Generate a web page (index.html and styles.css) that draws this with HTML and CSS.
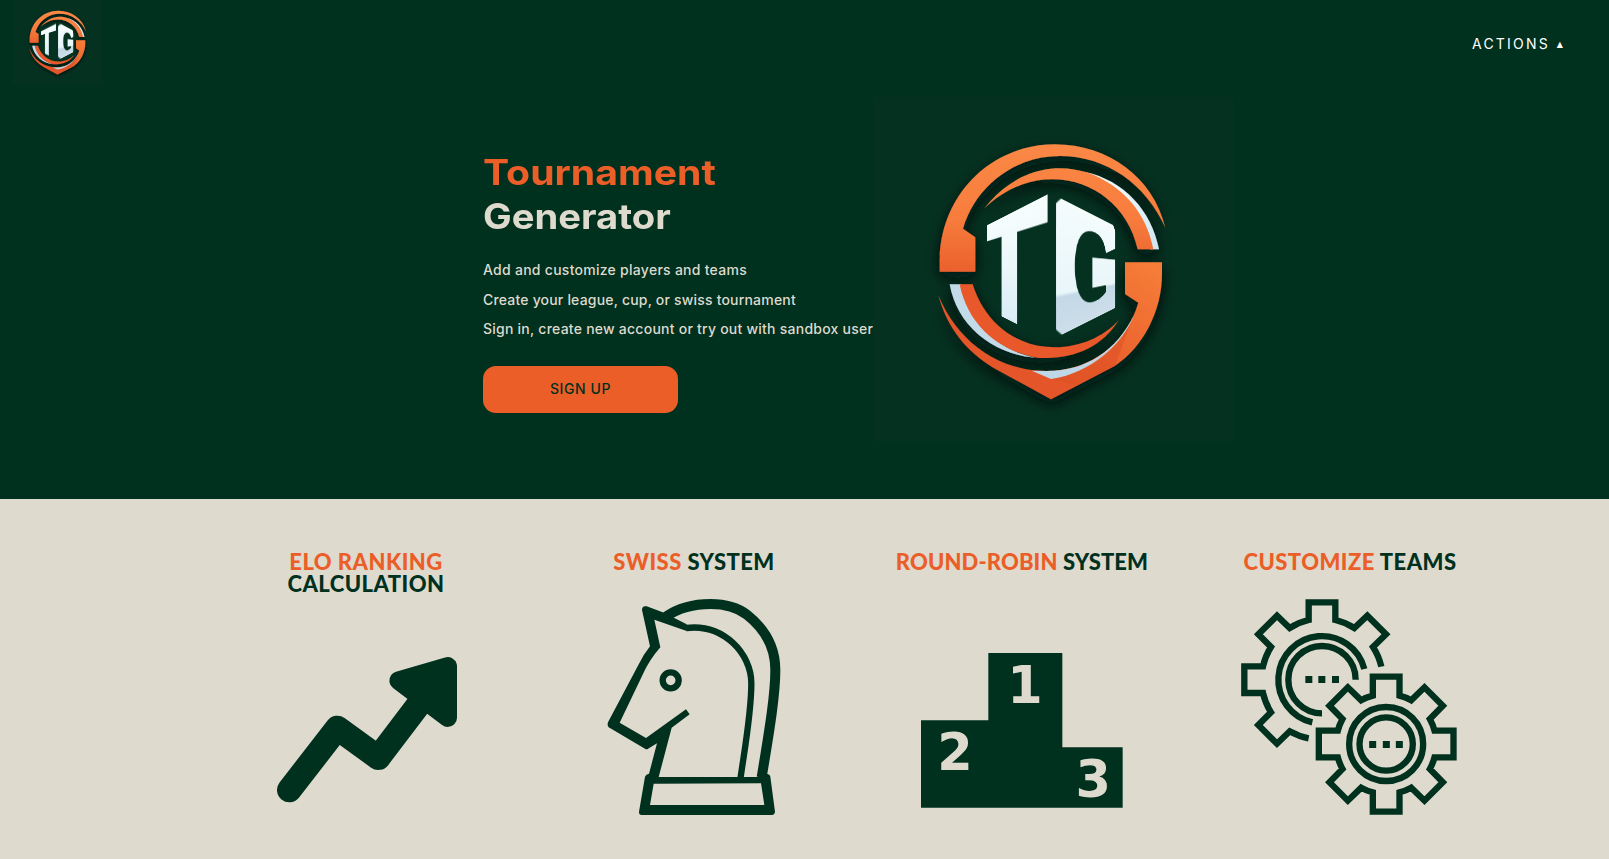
FILE: index.html
```html
<!DOCTYPE html>
<html lang="en">
<head>
<meta charset="utf-8">
<title>Tournament Generator</title>
<link rel="stylesheet" href="styles.css">
</head>
<body>
<svg class="defs" width="0" height="0" aria-hidden="true">
  <defs>
    <linearGradient id="warm" gradientUnits="userSpaceOnUse" x1="0" y1="162" x2="0" y2="550">
      <stop offset="0" stop-color="#fa8845"/><stop offset=".55" stop-color="#f87d3e"/><stop offset="1" stop-color="#ea602c"/>
    </linearGradient>
    <linearGradient id="ember" gradientUnits="userSpaceOnUse" x1="860" y1="516" x2="600" y2="880">
      <stop offset="0" stop-color="#f67c38"/><stop offset=".6" stop-color="#ec652e"/><stop offset="1" stop-color="#e4552a"/>
    </linearGradient>
    <linearGradient id="ice" x1="0" y1="0" x2="0" y2="1">
      <stop offset="0" stop-color="#f3fbfc"/><stop offset="1" stop-color="#cfe5f1"/>
    </linearGradient>
    <filter id="shade" x="-20%" y="-20%" width="140%" height="150%">
      <feDropShadow dx="0" dy="16" stdDeviation="20" flood-color="#00100a" flood-opacity=".85"/>
    </filter>
    <symbol id="emblem" viewBox="39 20 1080 1032">
      <g filter="url(#shade)">
        <path fill="url(#warm)" d="M239 544V510C242 310 395 162 585 162C745 162 880 262 916 412C858 282 740 197 600 197C460 197 345 290 309 415L346 441V544Z"/>
        <path fill="url(#ice)" d="M675 245C790 270 875 360 897 477H870C855 370 790 290 675 245Z"/>
        <path fill="url(#warm)" d="M373 354C430 280 510 234 600 234C630 234 655 239 680 246C790 285 860 370 880 477H833C805 350 700 267 577 267C500 267 430 300 373 354Z"/>
        <path fill="#c3dbe9" d="M269 582H305C330 690 400 775 525 802C390 790 290 700 269 582Z"/>
        <path fill="#e8592b" d="M299 582H338C375 700 470 771 585 771C660 771 730 740 776 690C730 765 650 803 560 803C545 803 530 803 520 800C400 775 320 690 299 582Z"/>
        <path fill="url(#ember)" d="M795 516H906V550C906 660 850 770 765 826L573 927L400 832C320 785 260 710 235 615C290 750 410 842 560 842C690 842 800 760 835 637L795 611Z"/>
        <path fill="#dc5027" opacity=".55" d="M818 683C775 780 690 850 573 866L650 886L765 826Z"/>
        <path fill="#bfd8e7" d="M515 841L573 866C690 850 790 760 822 674C770 780 680 842 560 842Z"/>
      </g>
    </symbol>
  </defs>
</svg>

<header class="topbar">
  <a class="logo logo-small" href="#">
    <svg class="logo-ring"><use href="#emblem"/></svg>
    <span class="letter letter-t">T</span><span class="letter letter-g">G</span>
  </a>
  <nav class="nav"><span class="nav-label">ACTIONS</span><span class="caret">▲</span></nav>
</header>

<main>
  <section class="hero">
    <div class="intro">
      <h1 class="title"><span class="accent title-first">Tournament</span><span class="title-second">Generator</span></h1>
      <p class="line line-one">Add and customize players and teams</p>
      <p class="line line-two">Create your league, cup, or swiss tournament</p>
      <p class="line line-three">Sign in, create new account or try out with sandbox user</p>
      <button class="signup">SIGN UP</button>
    </div>
    <div class="logo logo-large">
      <svg class="logo-ring"><use href="#emblem"/></svg>
      <span class="letter letter-t">T</span><span class="letter letter-g">G</span>
    </div>
  </section>

  <section class="features">
    <article class="feature">
      <h2 class="feature-title"><span class="accent">ELO RANKING</span><br>CALCULATION</h2>
      <svg class="icon" viewBox="-6 207 648 648">
        <path class="arrow-line" d="M88 780L232 594L355 683L475 525"/>
        <path class="arrow-head" d="M416 452L563 409V563Z"/>
      </svg>
    </article>
    <article class="feature">
      <h2 class="feature-title"><span class="accent">SWISS</span> SYSTEM</h2>
      <svg class="icon" viewBox="-12 207 648 648">
        <path class="stroke-bold" d="M228 260C265 234 310 222 362 222C402 222 442 232 471 254C528 299 556 352 556 420C556 500 535 620 515 742"/>
        <path class="stroke-thin" d="M288 294C400 280 484 370 484 460C484 550 465 650 451 748"/>
        <path class="solid" d="M156 240Q156 226 170 229L222 248L290 283V303L193 269L211 352Q178 390 160 430L89 578L168 624L288 538L299 553L245 593L205 745L176 735L201 640L173 657Q169 659 165 656L56 592Q51 586 54 577L145 405Q160 374 180 349Z"/>
        <circle class="stroke-thin" cx="242" cy="451" r="24"/>
        <path class="solid" fill-rule="evenodd" d="M165 740Q168 732 177 731L205 741H500L530 731Q540 733 541 740L555 845Q554 854 546 855H155Q146 854 147 845ZM191 761L180 825H523L513 760Z"/>
      </svg>
    </article>
    <article class="feature">
      <h2 class="feature-title feature-title-wide"><span class="accent">ROUND-ROBIN</span> SYSTEM</h2>
      <svg class="icon" viewBox="102 207 648 648">
        <path class="solid" d="M123 571H325V369H547V652H728V833H123Z"/>
        <text class="place" x="435" y="518">1</text>
        <text class="place" x="225" y="720">2</text>
        <text class="place" x="640" y="801">3</text>
      </svg>
    </article>
    <article class="feature">
      <h2 class="feature-title"><span class="accent">CUSTOMIZE</span> TEAMS</h2>
      <svg class="icon" viewBox="66 207 648 648">
        <g transform="translate(306 449)">
          <path class="stroke-thin" d="M178 -39A183 183 0 0 0 153 -98L192 -136L136 -192L97 -155A183 183 0 0 0 40 -179V-232H-40V-179A183 183 0 0 0 -97 -155L-135 -192L-191 -136L-153 -98A183 183 0 0 0 -177 -40H-233V40H-177A183 183 0 0 0 -153 98L-191 136L-135 192L-97 155A183 183 0 0 0 -40 176"/>
          <path class="stroke-thin" d="M127 -32A131 131 0 1 0 -29 128M101 0A101 101 0 1 0 0 101"/>
          <path class="solid" d="M-50 -11h21v21h-21zM-11 -11h21v21h-21zM30 -11h21v21h-21z"/>
        </g>
        <g transform="translate(498.500 642)">
          <path class="stroke-thin" d="M40 -202V-145A150 150 0 0 1 75 -131L115 -170L170 -115L131 -75A150 150 0 0 1 145 -40H202V40H145A150 150 0 0 1 131 75L170 115L115 170L75 131A150 150 0 0 1 40 145V203H-40V145A150 150 0 0 1 -75 131L-115 170L-170 115L-131 75A150 150 0 0 1 -145 40H-202V-40H-145A150 150 0 0 1 -131 -75L-170 -115L-115 -170L-75 -131A150 150 0 0 1 -40 -145V-202Z"/>
          <circle class="stroke-thin" r="111"/><circle class="stroke-thin" r="80"/>
          <path class="solid" d="M-51 -9h21v21h-21zM-10 -9h21v21h-21zM29 -9h21v21h-21z"/>
        </g>
      </svg>
    </article>
  </section>
</main>
</body>
</html>
```
FILE: styles.css
```css
:root {
  --green: #00301e;
  --orange: #eb5e28;
  --cream: #dedacd;
}

* { box-sizing: border-box; }

body {
  margin: 0;
  height: 859px;
  overflow: hidden;
  background: var(--cream);
  font-family: Inter, "Open Sans", sans-serif;
}

.defs { position: absolute; }

.topbar {
  display: flex;
  justify-content: space-between;
  height: 86px;
  padding: 0 46px 0 13px;
  background: var(--green);
}

.nav {
  display: flex;
  align-items: center;
  gap: 7px;
  height: 87px;
  color: #fff;
  font-size: 14px;
}

.nav-label { letter-spacing: 2.2px; }
.caret { font: 8px "DejaVu Sans", sans-serif; padding-top: 2px; }

/* The emblem scales with its font size: 1em is the width of its square. */
.logo {
  position: relative;
  display: block;
  flex: none;
  width: 1em;
  height: .9556em;
  background: #053121;
  text-decoration: none;
}

.logo-small { margin-top: -1px; font-size: 90px; }
.logo-large { font-size: 360px; }
.logo-ring { display: block; width: 100%; height: 100%; }

/* Both letters fold away from the centre of the emblem. */
.letter {
  position: absolute;
  top: calc(511em / 578 - .365em);
  height: .73em;
  font: bold .535em/.73 "Liberation Sans", Arial, sans-serif;
  color: transparent;
  background: linear-gradient(#f6fdfd, #ebf7fa 50%, #d9ecf6);
  -webkit-background-clip: text;
  background-clip: text;
}

.letter-t {
  right: calc(559em / 578 - .005em);
  width: .611em;
  -webkit-text-stroke: .025em transparent;
  transform-origin: .595em center;
  transform: perspective(.727em) rotateY(-45deg) scale(1.22, 1.03);
}

/* Trimming the round edges gives the G its squared corners. */
.letter-g {
  left: calc(546em / 578 - .09em);
  width: .778em;
  background-image: linear-gradient(#f6fdfd, #e9f6fa 66%, #c4d9e6 68%, #cfe1ec);
  -webkit-text-stroke: .07em transparent;
  clip-path: inset(.062em .085em .062em .095em);
  transform-origin: .095em center;
  transform: perspective(.727em) rotateY(45deg) scale(1.25, 1.2);
}

.hero {
  display: flex;
  height: 413px;
  padding: 11px 0 0 483px;
  background: var(--green);
}

.intro { width: 390px; padding-top: 53px; white-space: nowrap; }

.title {
  margin: 0 0 17px;
  color: var(--cream);
  font-size: 35px;
  font-weight: 700;
  line-height: 44px;
}

/* Widened letterforms for the headline. */
.title > span { display: block; transform-origin: left center; }
.title-first { transform: scaleX(1.12); }
.title-second { transform: scaleX(1.092); }
.accent { color: var(--orange); }

.line {
  margin: 0;
  color: var(--cream);
  font-size: 14px;
  font-weight: 500;
  line-height: 29.5px;
}

.line-one { letter-spacing: .27px; }
.line-two { letter-spacing: .19px; }
.line-three { letter-spacing: .24px; }

.signup {
  display: block;
  width: 195px;
  height: 47px;
  margin-top: 22px;
  padding: 0 0 1px;
  border: 0;
  border-radius: 13px;
  background: var(--orange);
  color: var(--green);
  font: 500 14px Inter, sans-serif;
  letter-spacing: .6px;
}

.features {
  display: grid;
  grid-template-columns: repeat(4, 328px);
  padding: 52px 0 0 202px;
}

.feature { display: flex; flex-direction: column; align-items: center; }

.feature-title {
  height: 48px;
  margin: 0;
  color: var(--green);
  font: 900 22px/22px Lato, sans-serif;
  letter-spacing: .45px;
  text-align: center;
  white-space: nowrap;
}

.feature-title-wide { letter-spacing: .12px; }

.icon { width: 216px; height: 216px; overflow: visible; }
.solid { fill: var(--green); }
.stroke-bold { fill: none; stroke: var(--green); stroke-width: 30; }
.stroke-thin { fill: none; stroke: var(--green); stroke-width: 19; }
.arrow-line { fill: none; stroke: var(--green); stroke-width: 74; stroke-linecap: round; stroke-linejoin: round; }
.arrow-head { fill: var(--green); stroke: var(--green); stroke-width: 56; stroke-linejoin: round; }
.place { fill: var(--cream); font: bold 153px "DejaVu Sans", sans-serif; text-anchor: middle; }
```
